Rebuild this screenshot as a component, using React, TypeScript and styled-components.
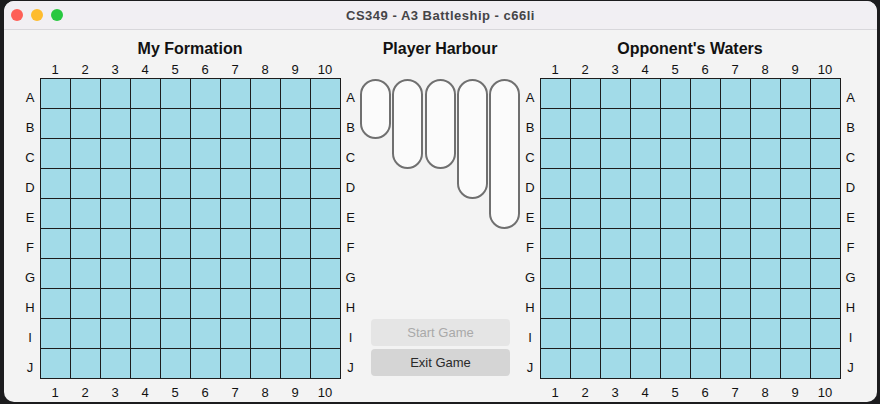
import React from "react";
import styled, { createGlobalStyle } from "styled-components";

const GlobalStyle = createGlobalStyle`
  html, body { margin: 0; padding: 0; background: #1c1c1e; }
  body { font-family: "Liberation Sans", Arial, sans-serif; }
  * { box-sizing: border-box; }
`;

const ROWS = ["A", "B", "C", "D", "E", "F", "G", "H", "I", "J"];
const COLS = [1, 2, 3, 4, 5, 6, 7, 8, 9, 10];
const SHIPS = [2, 3, 3, 4, 5];

const Screen = styled.div`
  width: 880px;
  height: 404px;
  padding: 1px 3px 2px 4px;
`;

const Window = styled.div`
  height: 401px;
  background: #f3f3f3;
  border-radius: 10px;
  overflow: hidden;
  display: flex;
  flex-direction: column;
`;

const TitleBar = styled.div`
  height: 29px;
  flex: none;
  background: #f1eff3;
  border-bottom: 1px solid #d8d7db;
  display: grid;
  grid-template-columns: 1fr auto 1fr;
  align-items: center;
`;

const Lights = styled.div`
  display: flex;
  gap: 8px;
  padding-left: 7px;
`;

const Light = styled.span<{ $color: string }>`
  width: 12px;
  height: 12px;
  border-radius: 50%;
  background: ${(p) => p.$color};
`;

const WindowTitle = styled.div`
  font-size: 13px;
  font-weight: bold;
  letter-spacing: 0.5px;
  color: #454447;
`;

const Content = styled.div`
  display: flex;
  padding: 8px 0 0 16px;
`;

const Board = styled.div`
  display: flex;
  flex-direction: column;
`;

const Title = styled.div`
  height: 20px;
  line-height: 21px;
  font-size: 16px;
  font-weight: bold;
  color: #111;
  text-align: center;
`;

const NumberRow = styled.div<{ $top?: boolean }>`
  height: 20px;
  display: grid;
  grid-template-columns: 20px repeat(10, 30px) 20px;
  align-items: ${(p) => (p.$top ? "end" : "center")};
  padding-bottom: ${(p) => (p.$top ? "1px" : "0")};
`;

const Num = styled.span`
  font-size: 13px;
  line-height: 15px;
  color: #111;
  text-align: center;
`;

const Middle = styled.div`
  display: flex;
`;

const RowLabels = styled.div<{ $width: number }>`
  width: ${(p) => p.$width}px;
  display: grid;
  grid-template-rows: repeat(10, 30px);
  padding-top: 4px;
`;

const RowLabel = styled.span`
  font-size: 13px;
  color: #111;
  display: flex;
  align-items: center;
  justify-content: center;
`;

const Grid = styled.div`
  width: 301px;
  height: 301px;
  padding: 1px;
  gap: 1px;
  background: #1d1d1d;
  display: grid;
  grid-template-columns: repeat(10, 29px);
  grid-template-rows: repeat(10, 29px);
`;

const Cell = styled.div`
  background: #a2dbe8;
`;

const Harbour = styled.div`
  width: 160px;
  display: flex;
  flex-direction: column;
`;

const Spacer = styled.div`
  height: 20px;
`;

const Ships = styled.div`
  display: flex;
  justify-content: space-between;
  align-items: flex-start;
  padding-top: 1px;
`;

const Ship = styled.div<{ $len: number }>`
  width: 31px;
  height: ${(p) => p.$len * 30}px;
  border: 2px solid #707070;
  border-radius: 16px;
  background: #fbfbfb;
`;

const Buttons = styled.div`
  margin-top: auto;
  display: flex;
  flex-direction: column;
  gap: 3px;
  padding: 0 10px 26px 11px;
`;

const Button = styled.button<{ $disabled?: boolean }>`
  height: 27px;
  border: none;
  border-radius: 4px;
  font-family: "Liberation Sans", Arial, sans-serif;
  font-size: 13px;
  background: ${(p) => (p.$disabled ? "#e5e5e5" : "#d5d5d5")};
  color: ${(p) => (p.$disabled ? "#a9a9a9" : "#2a2a2a")};
  padding: 0;
`;

function BoardView({ title }: { title: string }) {
  return (
    <Board>
      <Title>{title}</Title>
      <NumberRow $top>
        <span />
        {COLS.map((c) => (
          <Num key={c}>{c}</Num>
        ))}
      </NumberRow>
      <Middle>
        <RowLabels $width={20}>
          {ROWS.map((r) => (
            <RowLabel key={r}>{r}</RowLabel>
          ))}
        </RowLabels>
        <Grid>
          {Array.from({ length: 100 }).map((_, i) => (
            <Cell key={i} />
          ))}
        </Grid>
        <RowLabels $width={19}>
          {ROWS.map((r) => (
            <RowLabel key={r}>{r}</RowLabel>
          ))}
        </RowLabels>
      </Middle>
      <NumberRow>
        <span />
        {COLS.map((c) => (
          <Num key={c}>{c}</Num>
        ))}
      </NumberRow>
    </Board>
  );
}

export default function App() {
  return (
    <Screen>
      <GlobalStyle />
      <Window>
        <TitleBar>
          <Lights>
            <Light $color="#fe5f57" />
            <Light $color="#febc2e" />
            <Light $color="#28c840" />
          </Lights>
          <WindowTitle>CS349 - A3 Battleship - c66li</WindowTitle>
          <span />
        </TitleBar>
        <Content>
          <BoardView title="My Formation" />
          <Harbour>
            <Title>Player Harbour</Title>
            <Spacer />
            <Ships>
              {SHIPS.map((len, i) => (
                <Ship key={i} $len={len} />
              ))}
            </Ships>
            <Buttons>
              <Button $disabled>Start Game</Button>
              <Button>Exit Game</Button>
            </Buttons>
          </Harbour>
          <BoardView title="Opponent's Waters" />
        </Content>
      </Window>
    </Screen>
  );
}
